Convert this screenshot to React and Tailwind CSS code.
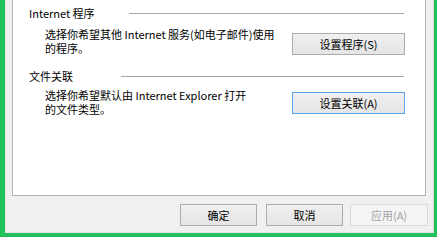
const font = { fontFamily: '"Noto Sans CJK SC", "Noto Sans", sans-serif' };

function Btn({ children, focused, disabled, className = "" }) {
  let tone = "border-[#acacac] bg-gradient-to-b from-[#f0f0f0] to-[#e5e5e5] text-black";
  if (focused) tone = "border-[#5aa6ee] bg-gradient-to-b from-[#f0f0f0] to-[#e5e5e5] text-black";
  if (disabled) tone = "border-[#dadada] bg-[#f4f4f4] text-[#a3a3a3]";
  return (
    <div
      className={`flex h-[22px] shrink-0 items-center justify-center border text-[11px] leading-none ${tone} ${className}`}
    >
      {children}
    </div>
  );
}

function SectionHeader({ title, lineWidth }) {
  return (
    <div className="flex h-[14px] items-center justify-between pl-[16px] pr-[21px]">
      <span className="text-[11px] leading-[14px] text-black">{title}</span>
      <div className={`h-px bg-[#a8a8a8] ${lineWidth}`} />
    </div>
  );
}

export default function App() {
  return (
    <div className="h-[237px] w-[437px] bg-[#22c15b] pb-[4px] pl-[5px] pr-[3px]" style={font}>
      <div className="flex h-full flex-col border-b border-l border-r border-b-[#e2e2e2] border-l-[#e2e2e2] border-r-[#d6d6d6] bg-[#f0f0f0]">
        {/* tab page */}
        <div className="ml-[6px] mr-[7px] flex h-[196px] flex-col border-b border-l border-r border-[#b2b2b2] bg-white pt-[6px]">
          <SectionHeader title="Internet 程序" lineWidth="w-[275px]" />
          <div className="mt-[7px] flex justify-between pl-[32px] pr-[20px]">
            <p className="whitespace-nowrap text-[11px] leading-[14px] text-black">
              选择你希望其他 Internet 服务(如电子邮件)使用
              <br />
              的程序。
            </p>
            <Btn className="mt-[6px] w-[113px]">设置程序(S)</Btn>
          </div>

          <div className="mt-[14px]">
            <SectionHeader title="文件关联" lineWidth="w-[283px]" />
          </div>
          <div className="mt-[5px] flex justify-between pl-[32px] pr-[20px]">
            <p className="whitespace-nowrap text-[11px] leading-[14px] text-black">
              选择你希望默认由 Internet Explorer 打开
              <br />
              的文件类型。
            </p>
            <Btn focused className="mt-[4px] w-[113px]">设置关联(A)</Btn>
          </div>
        </div>

        {/* dialog buttons */}
        <div className="mt-[8px] flex justify-end pr-[5px]">
          <Btn className="w-[77px]">确定</Btn>
          <Btn className="ml-[9px] w-[77px]">取消</Btn>
          <Btn disabled className="ml-[7px] w-[78px]">应用(A)</Btn>
        </div>
      </div>
    </div>
  );
}
